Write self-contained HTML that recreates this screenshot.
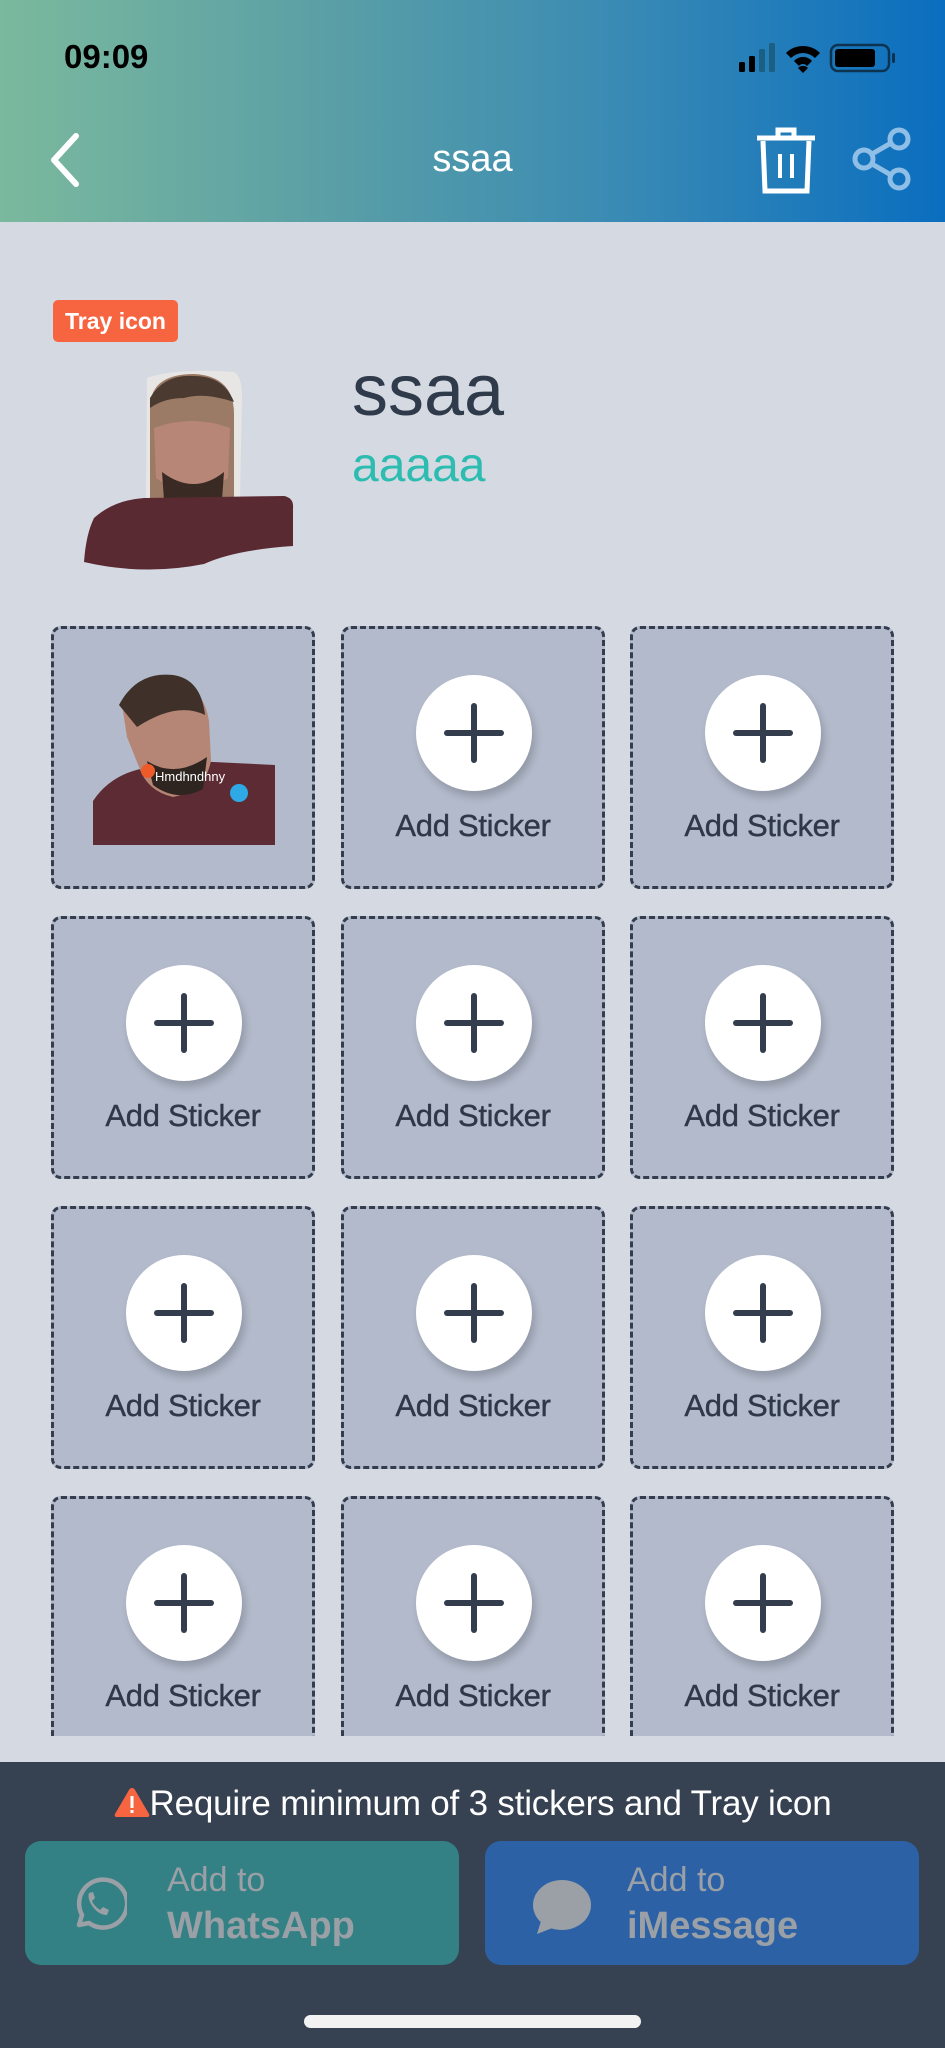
<!DOCTYPE html>
<html><head><meta charset="utf-8"><style>
*{margin:0;padding:0;box-sizing:border-box}
body{width:945px;height:2048px;position:relative;overflow:hidden;background:#d5d9e2;font-family:"Liberation Sans",sans-serif}
.hdr{position:absolute;left:0;top:0;width:945px;height:222px;background:linear-gradient(90deg,#7bb99d 0%,#5a9fa6 35%,#3a8bb4 65%,#0a6ebf 100%)}
.abs{position:absolute}
.grid{position:absolute;left:0;top:222px;width:945px;height:1514px;overflow:hidden}
.cell{position:absolute;width:264px;height:263px;background:#b2bacb;border:3px dashed #333d4d;border-radius:10px}
.circ{position:absolute;left:72px;top:46px;width:116px;height:116px;border-radius:50%;background:#fff;box-shadow:3px 6px 8px rgba(0,0,0,.18)}
.circ:before{content:"";position:absolute;left:28px;top:55px;width:60px;height:6px;border-radius:3px;background:#333d4d}
.circ:after{content:"";position:absolute;left:55px;top:28px;width:6px;height:60px;border-radius:3px;background:#333d4d}
.lbl{position:absolute;left:0;width:100%;top:179px;text-align:center;font-size:31px;color:#2f3848;letter-spacing:-0.3px;-webkit-text-stroke:0.4px #2f3848}
.bot{position:absolute;left:0;top:1762px;width:945px;height:286px;background:#364152}
.btn{position:absolute;top:1841px;height:124px;width:434px;border-radius:16px}
.bt{position:absolute;left:142px;top:16px;color:#9aa0a6;font-size:34px;line-height:46px}
.bt b{font-size:38px}
</style></head><body>
<div class="hdr">
 <div class="abs" style="left:64px;top:38px;font-size:33px;font-weight:bold;color:#000">09:09</div>
 <svg class="abs" style="left:735px;top:40px" width="175" height="34" viewBox="0 0 175 34">
  <rect x="4" y="22" width="6" height="10" rx="1.5" fill="#000"/>
  <rect x="14" y="16" width="6" height="16" rx="1.5" fill="#000"/>
  <rect x="24" y="9" width="6" height="23" rx="1.5" fill="#1b5f84"/>
  <rect x="34" y="3" width="6" height="29" rx="1.5" fill="#1b5f84"/>
  <path d="M51 13 A24 24 0 0 1 85 13 L80 18 A17 17 0 0 0 56 18Z M59 21 A12 12 0 0 1 77 21 L72 26 A5 5 0 0 0 64 26Z M68 33 L63 28 A7 7 0 0 1 73 28Z" fill="#000"/>
  <rect x="96" y="5" width="58" height="26" rx="7" fill="none" stroke="#0d3350" stroke-width="2.5"/>
  <rect x="100" y="9" width="40" height="18" rx="3" fill="#000"/>
  <rect x="157" y="13" width="3" height="10" rx="1.5" fill="#0d3350"/>
 </svg>
 <svg class="abs" style="left:44px;top:132px" width="40" height="56"><path d="M32 4 L10 28 L32 52" fill="none" stroke="#fff" stroke-width="6" stroke-linecap="round" stroke-linejoin="round"/></svg>
 <div class="abs" style="left:0;width:945px;top:138px;text-align:center;font-size:38px;color:#fff">ssaa</div>
 <svg class="abs" style="left:754px;top:124px" width="64" height="72" viewBox="0 0 64 72">
  <path d="M3 14 H61 M24 14 V6 H40 V14" fill="none" stroke="#fff" stroke-width="5"/>
  <path d="M9 17 L11 67 H53 L55 17" fill="none" stroke="#fff" stroke-width="5"/>
  <path d="M26 30 V54 M38 30 V54" stroke="#fff" stroke-width="4"/>
 </svg>
 <svg class="abs" style="left:850px;top:126px" width="64" height="66" viewBox="0 0 64 66">
  <g fill="none" stroke="#8fbfe6" stroke-width="5"><circle cx="49" cy="13" r="9"/><circle cx="14" cy="33" r="9"/><circle cx="49" cy="53" r="9"/><path d="M22 28 L41 17 M22 38 L41 49"/></g>
 </svg>
</div>

<div class="abs" style="left:53px;top:300px;width:125px;height:42px;background:#f76540;border-radius:5px;color:#fff;font-size:23px;font-weight:bold;text-align:center;line-height:42px">Tray icon</div>
<svg class="abs" style="left:84px;top:368px" width="212" height="206" viewBox="0 0 212 206">
 <path d="M63 10 Q90 0 150 4 Q158 8 158 30 L156 130 L62 130Z" fill="#e8e6e4"/>
 <path d="M66 40 Q66 6 110 6 Q150 8 150 46 L150 130 L66 130Z" fill="#9b7a66"/>
 <path d="M70 60 Q108 46 146 60 L144 110 Q108 136 72 110Z" fill="#b88676"/>
 <path d="M78 104 Q110 128 140 104 L138 132 L80 132Z" fill="#3a2a24"/>
 <path d="M66 30 Q80 6 110 8 Q140 8 150 34 Q120 24 100 30 Q80 30 66 40Z" fill="#4a3a30"/>
 <path d="M10 150 Q30 132 60 130 L200 128 Q210 130 209 140 L209 178 Q150 182 120 196 Q60 208 0 194 Q2 166 10 150Z" fill="#5a2a32"/>
</svg>
<div class="abs" style="left:352px;top:350px;font-size:72px;color:#2f3a4b">ssaa</div>
<div class="abs" style="left:352px;top:438px;font-size:48px;color:#2dbcb0">aaaaa</div>

<div class="grid">
 <div class="cell" style="left:51px;top:404px">
  <svg class="abs" style="left:39px;top:42px" width="184" height="176" viewBox="0 0 184 176">
   <path d="M0 130 Q20 100 60 96 L100 90 L182 94 L182 174 L0 174Z" fill="#5d2b33"/>
   <path d="M30 40 Q50 8 80 10 Q110 14 116 50 L118 90 Q112 120 80 126 Q54 120 46 96 L34 66Z" fill="#b58676"/>
   <path d="M26 34 Q44 0 80 4 Q108 8 112 44 Q84 30 44 56Z" fill="#3f3129"/>
   <path d="M54 90 Q82 108 114 86 L110 118 Q84 132 60 114Z" fill="#2e2420"/>
   <circle cx="55" cy="100" r="7" fill="#ef5a2b"/><circle cx="146" cy="122" r="9" fill="#2fa8e6"/>
   <text x="62" y="110" font-size="13" fill="#fff" font-family="Liberation Sans">Hmdhndhny</text>
  </svg>
 </div>
 <div class="cell" style="left:341px;top:404px"><div class="circ"></div><div class="lbl">Add Sticker</div></div>
 <div class="cell" style="left:630px;top:404px"><div class="circ"></div><div class="lbl">Add Sticker</div></div>
 <div class="cell" style="left:51px;top:694px"><div class="circ"></div><div class="lbl">Add Sticker</div></div>
 <div class="cell" style="left:341px;top:694px"><div class="circ"></div><div class="lbl">Add Sticker</div></div>
 <div class="cell" style="left:630px;top:694px"><div class="circ"></div><div class="lbl">Add Sticker</div></div>
 <div class="cell" style="left:51px;top:984px"><div class="circ"></div><div class="lbl">Add Sticker</div></div>
 <div class="cell" style="left:341px;top:984px"><div class="circ"></div><div class="lbl">Add Sticker</div></div>
 <div class="cell" style="left:630px;top:984px"><div class="circ"></div><div class="lbl">Add Sticker</div></div>
 <div class="cell" style="left:51px;top:1274px"><div class="circ"></div><div class="lbl">Add Sticker</div></div>
 <div class="cell" style="left:341px;top:1274px"><div class="circ"></div><div class="lbl">Add Sticker</div></div>
 <div class="cell" style="left:630px;top:1274px"><div class="circ"></div><div class="lbl">Add Sticker</div></div>
</div>

<div class="bot"></div>
<div class="abs" style="left:0;width:945px;top:1784px;text-align:center;font-size:35px;color:#fff;white-space:nowrap;letter-spacing:-0.2px">
 <svg width="36" height="32" viewBox="0 0 36 32" style="vertical-align:-3px"><path d="M18 2 Q20 2 21 4 L35 28 Q36 31 33 31 H3 Q0 31 1 28 L15 4 Q16 2 18 2Z" fill="#f76540"/><rect x="16.5" y="10" width="3" height="12" fill="#fff"/><rect x="16.5" y="24" width="3" height="3" fill="#fff"/></svg>Require minimum of 3 stickers and Tray icon</div>
<div class="btn" style="left:25px;background:#338184">
 <svg class="abs" style="left:44px;top:34px" width="58" height="58" viewBox="0 0 58 58"><path d="M10 50 L13 40 A24 24 0 1 1 20 48Z" fill="none" stroke="#9aa0a6" stroke-width="4.5" stroke-linejoin="round"/><path d="M20 18 Q18 24 24 32 Q30 40 38 40 L40 35 L34 32 L31 35 Q25 31 23 26 L26 23 L24 17Z" fill="#9aa0a6"/></svg>
 <div class="bt">Add to<br><b>WhatsApp</b></div>
</div>
<div class="btn" style="left:485px;background:#2c62a5">
 <svg class="abs" style="left:46px;top:38px" width="62" height="56" viewBox="0 0 62 56"><ellipse cx="31" cy="26" rx="29" ry="25" fill="#9aa0a6"/><path d="M10 42 L6 55 L24 48Z" fill="#9aa0a6"/></svg>
 <div class="bt">Add to<br><b>iMessage</b></div>
</div>
<div class="abs" style="left:304px;top:2015px;width:337px;height:13px;border-radius:7px;background:#f2f2f2"></div>
</body></html>
